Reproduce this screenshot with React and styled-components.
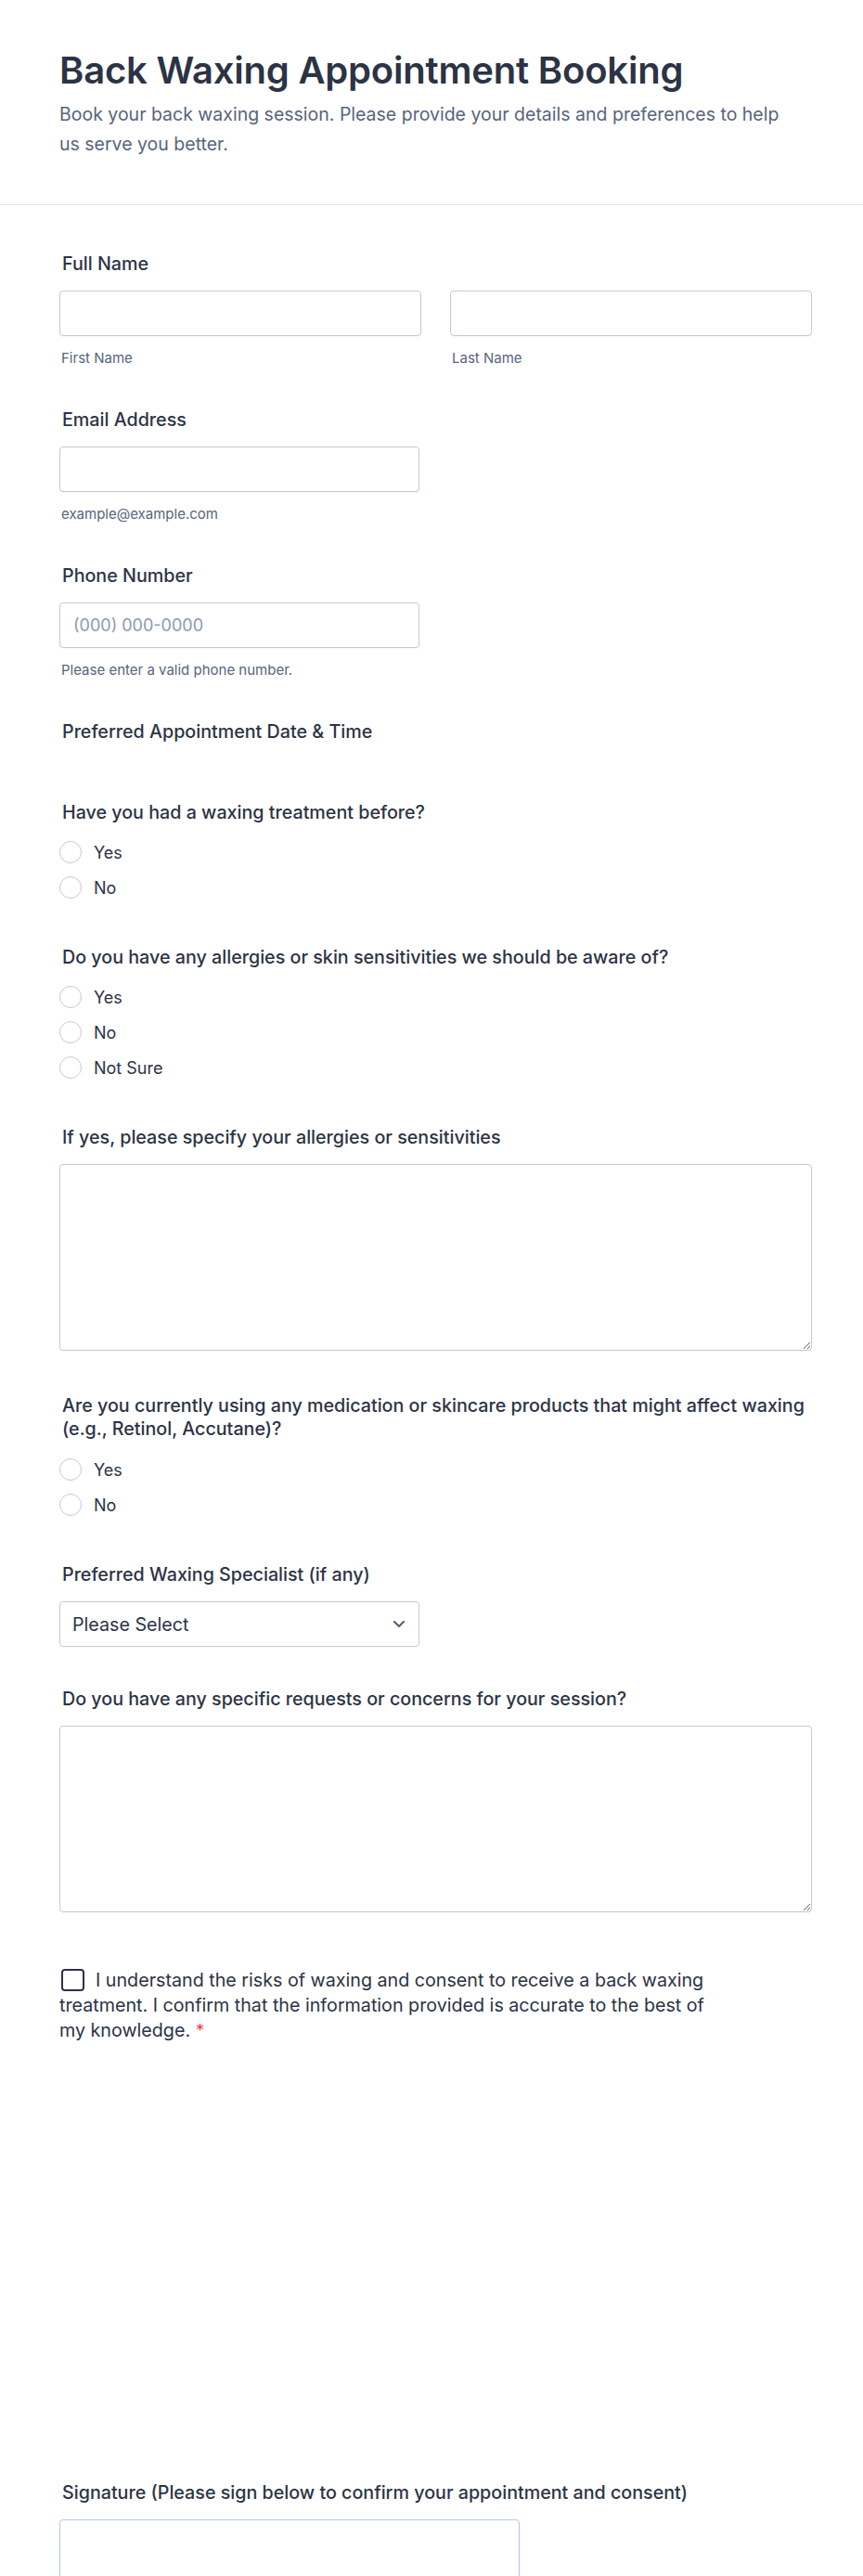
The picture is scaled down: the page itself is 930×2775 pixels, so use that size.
import React from "react";
import styled, { createGlobalStyle } from "styled-components";

const GlobalStyle = createGlobalStyle`
  * {
    box-sizing: border-box;
  }
  body {
    margin: 0;
    background: #fff;
    font-family: Inter, "Noto Sans", "Liberation Sans", sans-serif;
    color: #2c3345;
  }
`;

const Page = styled.div`
  width: 100%;
  min-height: 2775px;
  background: #fff;
`;

const Header = styled.header`
  padding: 52px 64px 49px;
  border-bottom: 1px solid #e3e5ea;
`;

const Title = styled.h1`
  margin: 0;
  font-size: 40px;
  line-height: 48px;
  font-weight: 600;
  color: #2c3345;
  letter-spacing: -0.2px;
`;

const Subtitle = styled.p`
  margin: 7px 0 0;
  font-size: 19.5px;
  line-height: 32px;
  color: #57647e;
`;

const Form = styled.form`
  padding: 51px 55px 0 64px;
  display: flex;
  flex-direction: column;
`;

const Field = styled.div`
  display: flex;
  flex-direction: column;
  margin-bottom: ${(p) => p.$gap ?? 44}px;
`;

const Label = styled.label`
  font-size: 19.7px;
  line-height: 25px;
  font-weight: 500;
  color: #2c3345;
  padding-left: 3px;
  margin-right: -12px;
  margin-bottom: ${(p) => p.$space ?? 16}px;
`;

const Row = styled.div`
  display: grid;
  grid-template-columns: 1fr 1fr;
  column-gap: 31px;
`;

const Col = styled.div`
  display: flex;
  flex-direction: column;
`;

const Input = styled.input`
  width: ${(p) => (p.$half ? "388px" : "100%")};
  height: 49px;
  padding: 0 14px;
  border: 1px solid #c3cad8;
  border-radius: 4px;
  font-family: inherit;
  font-size: 18px;
  color: #2c3345;
  background: #fff;
  box-shadow: 0 1px 1px rgba(87, 100, 126, 0.06);
  &::placeholder {
    color: #8d99ad;
  }
`;

const Sublabel = styled.span`
  margin-top: 14px;
  font-size: 15px;
  line-height: 20px;
  color: #57647e;
  padding-left: 2px;
`;

const Spacer = styled.div`
  height: ${(p) => p.$h}px;
`;

const Options = styled.div`
  display: flex;
  flex-direction: column;
`;

const Option = styled.label`
  display: flex;
  align-items: center;
  gap: 13px;
  height: 38px;
  font-size: 18px;
  color: #2c3345;
`;

const Radio = styled.span`
  width: 24px;
  height: 24px;
  border-radius: 50%;
  border: 1.5px solid #c3cad8;
  background: #fff;
  flex-shrink: 0;
`;

const TextArea = styled.textarea`
  display: block;
  width: 100%;
  height: 201px;
  border: 1px solid #c3cad8;
  border-radius: 4px;
  padding: 12px 14px;
  font-family: inherit;
  font-size: 18px;
  resize: vertical;
  box-shadow: 0 1px 1px rgba(87, 100, 126, 0.06);
`;

const SelectBox = styled.div`
  width: 388px;
  height: 49px;
  border: 1px solid #c3cad8;
  border-radius: 4px;
  display: flex;
  align-items: center;
  justify-content: space-between;
  padding: 0 14px 0 13px;
  font-size: 19.7px;
  color: #2c3345;
  box-shadow: 0 1px 1px rgba(87, 100, 126, 0.06);
`;

const Consent = styled.div`
  max-width: 715px;
  font-size: 19.7px;
  line-height: 27px;
  color: #2c3345;
  margin-top: 60px;
  margin-bottom: 472px;
`;

const Checkbox = styled.span`
  display: inline-block;
  width: 25px;
  height: 24px;
  border: 2px solid #2c3345;
  border-radius: 4px;
  vertical-align: -5px;
  margin: 0 12px 0 2px;
`;

const Required = styled.span`
  color: #f23a3c;
  margin-left: 6px;
  font-size: 18px;
`;

const SignaturePad = styled.div`
  width: 496px;
  height: 200px;
  border: 1px solid #b5c6e2;
  border-radius: 4px;
  background: #fff;
`;

const Chevron = () => (
  <svg width="14" height="9" viewBox="0 0 14 9" fill="none">
    <path
      d="M2 2l5 5 5-5"
      stroke="#57647e"
      strokeWidth="2.2"
      strokeLinecap="round"
      strokeLinejoin="round"
    />
  </svg>
);

const RadioGroup = ({ options }) => (
  <Options>
    {options.map((o) => (
      <Option key={o}>
        <Radio />
        {o}
      </Option>
    ))}
  </Options>
);

export default function App() {
  return (
    <Page>
      <GlobalStyle />
      <Header>
        <Title>Back Waxing Appointment Booking</Title>
        <Subtitle>
          Book your back waxing session. Please provide your details and
          preferences to help us serve you better.
        </Subtitle>
      </Header>
      <Form>
        <Field>
          <Label>Full Name</Label>
          <Row>
            <Col>
              <Input />
              <Sublabel>First Name</Sublabel>
            </Col>
            <Col>
              <Input />
              <Sublabel>Last Name</Sublabel>
            </Col>
          </Row>
        </Field>

        <Field>
          <Label>Email Address</Label>
          <Input $half />
          <Sublabel>example@example.com</Sublabel>
        </Field>

        <Field>
          <Label>Phone Number</Label>
          <Input $half placeholder="(000) 000-0000" />
          <Sublabel>Please enter a valid phone number.</Sublabel>
        </Field>

        <Field>
          <Label $space={0}>Preferred Appointment Date &amp; Time</Label>
          <Spacer $h={18} />
        </Field>

        <Field>
          <Label $space={11}>Have you had a waxing treatment before?</Label>
          <RadioGroup options={["Yes", "No"]} />
        </Field>

        <Field>
          <Label $space={11}>
            Do you have any allergies or skin sensitivities we should be aware
            of?
          </Label>
          <RadioGroup options={["Yes", "No", "Not Sure"]} />
        </Field>

        <Field $gap={47}>
          <Label>If yes, please specify your allergies or sensitivities</Label>
          <TextArea />
        </Field>

        <Field>
          <Label $space={12}>
            Are you currently using any medication or skincare products that
            might affect waxing (e.g., Retinol, Accutane)?
          </Label>
          <RadioGroup options={["Yes", "No"]} />
        </Field>

        <Field>
          <Label>Preferred Waxing Specialist (if any)</Label>
          <SelectBox>
            Please Select
            <Chevron />
          </SelectBox>
        </Field>

        <Field $gap={0}>
          <Label>Do you have any specific requests or concerns for your session?</Label>
          <TextArea />
        </Field>

        <Consent>
          <Checkbox />
          I understand the risks of waxing and consent to receive a back waxing
          treatment. I confirm that the information provided is accurate to the
          best of my knowledge.
          <Required>*</Required>
        </Consent>

        <Field>
          <Label $space={16}>
            Signature (Please sign below to confirm your appointment and
            consent)
          </Label>
          <SignaturePad />
        </Field>
      </Form>
    </Page>
  );
}
